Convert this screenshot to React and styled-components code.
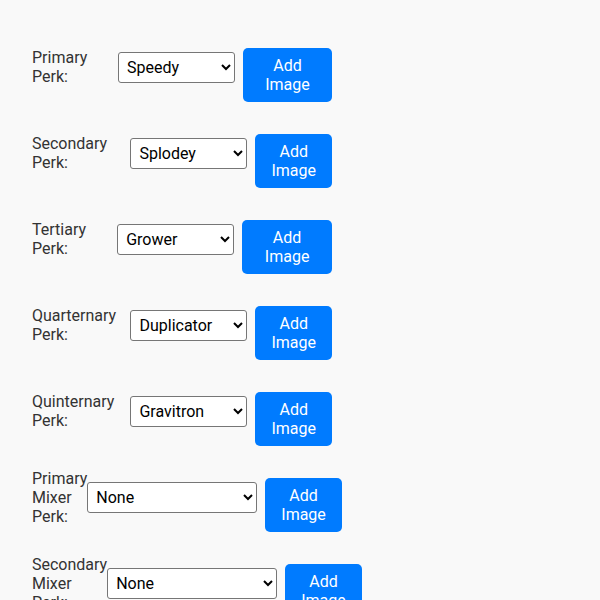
import React from 'react';
import styled, { createGlobalStyle } from 'styled-components';

const GlobalStyle = createGlobalStyle`
  body {
    margin: 0;
    background: #f9f9f9;
    font-family: Roboto, 'Liberation Sans', sans-serif;
  }
`;

const Page = styled.div`
  padding: 48px 32px;
`;

const Row = styled.div`
  display: flex;
  align-items: center;
  width: 300px;
  height: 54px;
  margin-bottom: 32px;
`;

const Label = styled.label`
  flex: 0 1 auto;
  margin-bottom: 16px;
  font-size: 16px;
  color: #333;
`;

const Select = styled.select`
  flex: 0 0 auto;
  box-sizing: border-box;
  width: ${({ wide }) => (wide ? '170px' : '117px')};
  height: 31px;
  margin-bottom: 16px;
  padding: 0 4px;
  border: 1px solid #767676;
  border-radius: 3px;
  background: #fff;
  color: #000;
  font-family: Roboto, 'Liberation Sans', sans-serif;
  font-size: 16px;
`;

// shrinks faster than the label, stops at the width of "Image"
const Button = styled.button`
  flex: 0 3.7 auto;
  box-sizing: border-box;
  width: 120px;
  margin-left: 8px;
  padding: 8px 16px;
  border: none;
  border-radius: 5px;
  background: #007bff;
  color: #fff;
  font-family: Roboto, 'Liberation Sans', sans-serif;
  font-size: 16px;
  cursor: pointer;
`;

const perks = [
  { label: 'Primary Perk:', value: 'Speedy' },
  { label: 'Secondary Perk:', value: 'Splodey' },
  { label: 'Tertiary Perk:', value: 'Grower' },
  { label: 'Quarternary Perk:', value: 'Duplicator' },
  { label: 'Quinternary Perk:', value: 'Gravitron' },
  { label: 'Primary Mixer Perk:', value: 'None', wide: true },
  { label: 'Secondary Mixer Perk:', value: 'None', wide: true },
];

const options = ['None', 'Speedy', 'Splodey', 'Grower', 'Duplicator', 'Gravitron'];

const App = () => (
  <Page>
    <GlobalStyle />
    {perks.map((perk) => (
      <Row key={perk.label}>
        <Label>{perk.label}</Label>
        <Select wide={perk.wide} defaultValue={perk.value}>
          {options.map((o) => (
            <option key={o}>{o}</option>
          ))}
        </Select>
        <Button>Add Image</Button>
      </Row>
    ))}
  </Page>
);

export default App;
